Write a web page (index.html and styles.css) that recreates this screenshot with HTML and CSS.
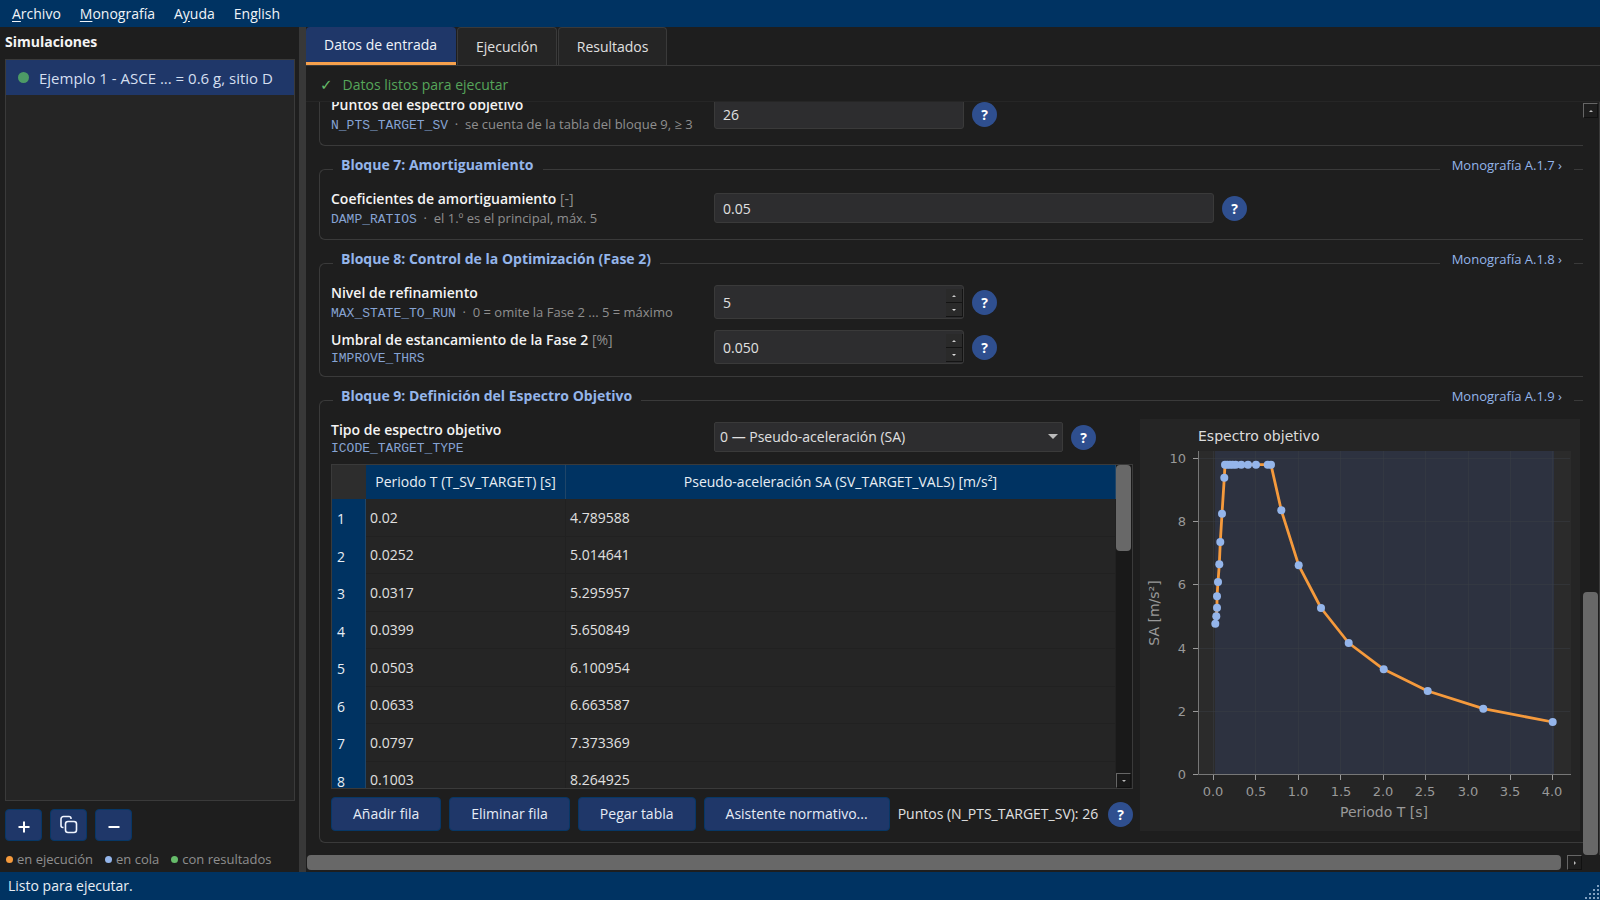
FILE: index.html
```html
<!DOCTYPE html>
<html lang="es">
<head>
<meta charset="utf-8">
<title>Simulaciones</title>
<link rel="stylesheet" href="styles.css">
</head>
<body>
<nav class="menubar">
  <button type="button"><u>A</u>rchivo</button>
  <button type="button"><u>M</u>onografía</button>
  <button type="button">A<u>y</u>uda</button>
  <button type="button">English</button>
</nav>

<div class="workspace">
  <aside class="sidebar">
    <h1 class="sidebar-title">Simulaciones</h1>
    <ul class="sim-list">
      <li class="sim-item"><span class="sim-dot"></span>Ejemplo 1 - ASCE ... = 0.6 g, sitio D</li>
    </ul>
    <div class="sim-actions">
      <button type="button" class="btn btn-icon" aria-label="Nueva"><svg width="14" height="18" viewBox="0 0 14 18"><path d="M7 5.500v11M1.500 11h11" stroke="#fff" stroke-width="2" fill="none"/></svg></button>
      <button type="button" class="btn btn-icon" aria-label="Duplicar"><svg width="20" height="20" viewBox="0 0 20 20" fill="none" stroke="#f0f4ff" stroke-width="1.600"><rect x="6.500" y="6.500" width="11" height="11" rx="2.500"/><path d="M4.500 12.500h-.5a2 2 0 0 1-2-2V4a2.500 2.500 0 0 1 2.500-2.500H10a2 2 0 0 1 2 2V4"/></svg></button>
      <button type="button" class="btn btn-icon" aria-label="Eliminar"><svg width="14" height="18" viewBox="0 0 14 18"><path d="M1.500 11h11" stroke="#fff" stroke-width="2" fill="none"/></svg></button>
    </div>
    <div class="legend">
      <span><i class="key key-run"></i>en ejecución</span>
      <span><i class="key key-queue"></i>en cola</span>
      <span><i class="key key-done"></i>con resultados</span>
    </div>
  </aside>
  <div class="splitter"></div>

  <main class="main">
    <div class="tabs" role="tablist">
      <button type="button" role="tab" class="tab tab-active" aria-selected="true">Datos de entrada</button>
      <button type="button" role="tab" class="tab">Ejecución</button>
      <button type="button" role="tab" class="tab">Resultados</button>
    </div>
    <div class="ready"><span class="check">✓</span>Datos listos para ejecutar</div>

    <div class="scroll-area">
      <div class="viewport">
        <section class="group">
          <div class="field">
            <div class="caption"><label for="npts">Puntos del espectro objetivo</label>
              <div class="sub"><code>N_PTS_TARGET_SV</code>  ·  se cuenta de la tabla del bloque 9, ≥ 3</div></div>
            <input class="input" id="npts" type="text" value="26" readonly>
            <button type="button" class="help" aria-label="Ayuda">?</button>
          </div>
        </section>

        <section class="group">
          <header class="group-head"><h2>Bloque 7: Amortiguamiento</h2><a href="#a17">Monografía A.1.7 ›</a></header>
          <div class="field">
            <div class="caption"><label for="damp">Coeficientes de amortiguamiento</label> <span class="unit">[-]</span>
              <div class="sub"><code>DAMP_RATIOS</code>  ·  el 1.º es el principal, máx. 5</div></div>
            <input class="input input-wide" id="damp" type="text" value="0.05">
            <button type="button" class="help" aria-label="Ayuda">?</button>
          </div>
        </section>

        <section class="group">
          <header class="group-head"><h2>Bloque 8: Control de la Optimización (Fase 2)</h2><a href="#a18">Monografía A.1.8 ›</a></header>
          <div class="field">
            <div class="caption"><label for="maxstate">Nivel de refinamiento</label>
              <div class="sub"><code>MAX_STATE_TO_RUN</code>  ·  0 = omite la Fase 2 ... 5 = máximo</div></div>
            <div class="spin"><input class="input" id="maxstate" type="text" value="5">
              <div class="steps"><button type="button" class="step step-up" aria-label="Más"></button><button type="button" class="step step-down" aria-label="Menos"></button></div></div>
            <button type="button" class="help" aria-label="Ayuda">?</button>
          </div>
          <div class="field">
            <div class="caption"><label for="thrs">Umbral de estancamiento de la Fase 2</label> <span class="unit">[%]</span>
              <div class="sub sub-short"><code>IMPROVE_THRS</code></div></div>
            <div class="spin"><input class="input" id="thrs" type="text" value="0.050">
              <div class="steps"><button type="button" class="step step-up" aria-label="Más"></button><button type="button" class="step step-down" aria-label="Menos"></button></div></div>
            <button type="button" class="help" aria-label="Ayuda">?</button>
          </div>
        </section>

        <section class="group">
          <header class="group-head"><h2>Bloque 9: Definición del Espectro Objetivo</h2><a href="#a19">Monografía A.1.9 ›</a></header>
          <div class="spectrum">
            <div class="spectrum-data">
              <div class="field">
                <div class="caption"><label for="ttype">Tipo de espectro objetivo</label>
                  <div class="sub sub-short"><code>ICODE_TARGET_TYPE</code></div></div>
                <div class="combo"><select id="ttype"><option>0 — Pseudo-aceleración (SA)</option></select></div>
                <button type="button" class="help" aria-label="Ayuda">?</button>
              </div>

              <div class="table-frame">
                <div class="table-clip">
                  <table class="grid">
                    <colgroup><col class="col-n"><col class="col-t"><col></colgroup>
                    <thead><tr><td class="corner"></td><th scope="col">Periodo T (T_SV_TARGET) [s]</th><th scope="col">Pseudo-aceleración SA (SV_TARGET_VALS) [m/s²]</th></tr></thead>
                    <tbody>
                      <tr><th scope="row">1</th><td>0.02</td><td>4.789588</td></tr>
                      <tr><th scope="row">2</th><td>0.0252</td><td>5.014641</td></tr>
                      <tr><th scope="row">3</th><td>0.0317</td><td>5.295957</td></tr>
                      <tr><th scope="row">4</th><td>0.0399</td><td>5.650849</td></tr>
                      <tr><th scope="row">5</th><td>0.0503</td><td>6.100954</td></tr>
                      <tr><th scope="row">6</th><td>0.0633</td><td>6.663587</td></tr>
                      <tr><th scope="row">7</th><td>0.0797</td><td>7.373369</td></tr>
                      <tr><th scope="row">8</th><td>0.1003</td><td>8.264925</td></tr>
                    </tbody>
                  </table>
                </div>
                <div class="vbar"><div class="thumb thumb-table"></div><span class="arrow arrow-down"></span></div>
              </div>

              <div class="table-actions">
                <button type="button" class="btn">Añadir fila</button>
                <button type="button" class="btn">Eliminar fila</button>
                <button type="button" class="btn">Pegar tabla</button>
                <button type="button" class="btn">Asistente normativo...</button>
                <span class="count">Puntos (N_PTS_TARGET_SV): 26</span>
                <button type="button" class="help" aria-label="Ayuda">?</button>
              </div>
            </div>

            <figure class="chart">
              <svg viewBox="0 -1 440 412" role="img" aria-label="Espectro objetivo">
                <rect x="58" y="31" width="373" height="323" fill="#2b2b2b"/>
                <rect x="75" y="31" width="339" height="323" fill="#2d3240"/>
                <path class="gridline" d="M73.500 31v323M115.500 31v323M158.500 31v323M200.500 31v323M243.500 31v323M285.500 31v323M328.500 31v323M370.500 31v323M412.500 31v323M58 38.500h372M58 101.500h372M58 164.500h372M58 228.500h372M58 291.500h372"/>
                <path class="axis" d="M58.500 31v323.500H431"/>
                <path class="tick" d="M53 38.500h5M53 101.500h5M53 164.500h5M53 228.500h5M53 291.500h5M53 354.500h5M73.500 355v5M115.500 355v5M158.500 355v5M200.500 355v5M243.500 355v5M285.500 355v5M328.500 355v5M370.500 355v5M412.500 355v5"/>
                <polyline id="curve" fill="none" stroke="#f59a3c" stroke-width="2.800" stroke-linejoin="round" marker-start="url(#dot)" marker-mid="url(#dot)" marker-end="url(#dot)" points="75.300,203.700 76.300,196.300 77,187.700 77,176.300 78,162 79.300,144.300 80.300,122 82,93.700 84.300,57.700 85,44.700 87.300,44.700 90,44.700 92.700,44.700 95.700,44.700 101.300,44.700 108,44.700 116,44.700 127.700,44.700 131,44.700 141.300,90.300 158.700,145.300 181,188 208.700,223 243.700,249.300 287.700,271 343.300,288.700 412.700,302"/>
                <defs><marker id="dot" markerUnits="userSpaceOnUse" markerWidth="10" markerHeight="10" refX="5" refY="5"><circle cx="5" cy="5" r="4" fill="#94b5ea"/></marker></defs>
                <text class="chart-title" x="58" y="21">Espectro objetivo</text>
                <g class="ticks-y"><text x="46" y="43">10</text><text x="46" y="106">8</text><text x="46" y="169">6</text><text x="46" y="233">4</text><text x="46" y="296">2</text><text x="46" y="359">0</text></g>
                <g class="ticks-x"><text x="73" y="376">0.0</text><text x="116" y="376">0.5</text><text x="158" y="376">1.0</text><text x="201" y="376">1.5</text><text x="243" y="376">2.0</text><text x="285" y="376">2.5</text><text x="328" y="376">3.0</text><text x="370" y="376">3.5</text><text x="412" y="376">4.0</text></g>
                <text class="axis-title" x="244" y="397">Periodo T [s]</text>
                <text class="axis-title" transform="translate(19 193) rotate(-90)">SA [m/s²]</text>
              </svg>
            </figure>
          </div>
        </section>
      </div>

      <div class="vbar vbar-main"><span class="arrow arrow-up"></span><div class="thumb thumb-main"></div></div>
      <div class="hbar"><div class="thumb thumb-h"></div><span class="arrow arrow-right"></span></div>
    </div>
  </main>
</div>

<footer class="statusbar"><span>Listo para ejecutar.</span>
  <svg class="grip" width="16" height="16" viewBox="0 0 16 16" fill="#7f9fc0"><path d="M13 1h2v2h-2zM9 5h2v2H9zM13 5h2v2h-2zM5 9h2v2H5zM9 9h2v2H9zM13 9h2v2h-2zM1 13h2v2H1zM5 13h2v2H5zM9 13h2v2H9zM13 13h2v2h-2z"/></svg>
</footer>
</body>
</html>
```
FILE: styles.css
```css
:root {
  --bg: #1e1e1e;
  --panel: #252525;
  --line: #3a3a3a;
  --navy: #003362;
  --blue: #1f3769;
  --link: #94b5ea;
  --text: #e0e0e0;
  --muted: #8f8f8f;
}

* { box-sizing: border-box; }

body {
  margin: 0;
  height: 100vh;
  display: flex;
  flex-direction: column;
  overflow: hidden;
  background: var(--bg);
  color: var(--text);
  font: 14px/20px "Open Sans", "Noto Sans", sans-serif;
}

button, input, select { font: inherit; color: inherit; margin: 0; }
button { cursor: pointer; }
h1, h2, ul, figure { margin: 0; padding: 0; }

.menubar {
  display: flex;
  flex: none;
  gap: 1px;
  height: 27px;
  padding: 0 3px;
  background: var(--navy);
}
.menubar button {
  padding: 0 9px;
  border: 0;
  background: none;
  color: #f0f4f8;
}
.menubar u { text-underline-offset: 2px; }

.workspace { display: flex; flex: 1; min-height: 0; }

.sidebar {
  display: flex;
  flex-direction: column;
  flex: none;
  width: 299px;
  padding: 5px 4px 2px 5px;
}
.sidebar-title { font-size: 14px; line-height: 20px; font-weight: 700; color: #f4f4f4; }
.sim-list {
  flex: 1;
  margin-top: 7px;
  border: 1px solid var(--line);
  background: var(--panel);
  list-style: none;
}
.sim-item {
  display: flex;
  align-items: center;
  gap: 10px;
  height: 35px;
  padding-left: 12px;
  background: var(--blue);
  color: #d4dff0;
  font-size: 15px;
  white-space: nowrap;
}
.sim-dot { width: 11px; height: 11px; border-radius: 50%; background: #4d9b66; }
.sim-actions { display: flex; gap: 8px; margin-top: 8px; }

.btn {
  height: 34px;
  padding: 0 21px;
  border: 1px solid #073766;
  border-radius: 4px;
  background: var(--blue);
  color: #e6ecf6;
  white-space: nowrap;
}
.btn-icon {
  display: flex;
  align-items: center;
  justify-content: center;
  width: 37px;
  height: 32px;
  padding: 0;
}

.legend {
  display: flex;
  gap: 11px;
  margin-top: 7px;
  color: var(--muted);
  font-size: 13px;
  line-height: 22px;
}
.legend span { display: flex; align-items: center; gap: 4px; }
.key { width: 7px; height: 7px; margin-left: 1px; border-radius: 50%; }
.key-run { background: #f59a3c; }
.key-queue { background: #94b5ea; }
.key-done { background: #66bb6a; }

.splitter { flex: none; width: 7px; background: #383838; }

.main { display: flex; flex-direction: column; flex: 1; min-width: 0; }

.tabs {
  display: flex;
  gap: 1px;
  flex: none;
  height: 39px;
  border-bottom: 1px solid var(--line);
}
.tab {
  padding: 0 18px;
  border: 1px solid var(--line);
  border-bottom: 0;
  border-radius: 4px 4px 0 0;
  background: var(--panel);
}
.tab-active {
  padding: 0 19px 0 18px;
  border: 0;
  border-bottom: 3px solid #f5a04c;
  background: var(--blue);
  color: #f0f4fa;
}

.ready {
  display: flex;
  gap: 10px;
  flex: none;
  height: 36px;
  padding: 9px 14px 0;
  border-bottom: 1px solid #262626;
  color: #56a55a;
}
.check { font-family: "DejaVu Sans", sans-serif; font-size: 15px; color: #66bb6a; }

.scroll-area {
  display: grid;
  grid-template: minmax(0, 1fr) 17px / minmax(0, 1fr) 17px;
  flex: 1;
  min-height: 0;
}
.viewport {
  display: flex;
  flex-direction: column;
  justify-content: flex-end;
  gap: 23px;
  overflow: hidden;
  padding: 0 0 12px 13px;
}

.group {
  flex: none;
  padding: 18px 3px 11px 11px;
  border: 1px solid var(--line);
  border-right: 0;
  border-radius: 6px 0 0 6px;
}
.group-head {
  display: flex;
  justify-content: space-between;
  height: 22px;
  margin: -34px 6px 12px 2px;
}
.group-head h2,
.group-head a { background: var(--bg); line-height: 22px; white-space: nowrap; }
.group-head h2 { padding: 0 9px 0 8px; font-size: 14px; font-weight: 700; color: var(--link); }
.group-head a { padding: 0 12px; font-size: 13px; color: var(--link); text-decoration: none; }

.field { display: flex; align-items: center; gap: 8px; }
.field + .field { margin-top: 7px; }
.caption { flex: none; width: 375px; padding-bottom: 2px; line-height: 22px; white-space: nowrap; }
.caption label { font-weight: 600; color: #f4f4f4; }
.unit { color: var(--muted); }
.sub { color: var(--muted); font-size: 13px; line-height: 16px; white-space: pre; }
.sub-short { line-height: 12px; }
.sub code { font: 13px "Liberation Mono", monospace; line-height: 0; color: #86a3d3; }

.input {
  width: 250px;
  height: 30px;
  padding: 0 8px;
  border: 1px solid var(--line);
  border-radius: 3px;
  background: #2d2d2f;
}
.input-wide { width: 500px; }

.spin { position: relative; }
.spin .input { display: block; height: 34px; }
.steps { position: absolute; top: 4px; right: 1px; width: 17px; }
.step {
  display: flex;
  align-items: center;
  justify-content: center;
  width: 100%;
  height: 14px;
  padding: 0;
  border: solid #141414;
  border-width: 0 1px 1px 0;
  background: #2a2a2a;
}
.step::before { content: ""; border: 2px solid transparent; }
.step-up::before { border-bottom-color: #ccc; border-top-width: 0; }
.step-down::before { border-top-color: #ddd; border-bottom-width: 0; }

.help {
  flex: none;
  width: 25px;
  height: 25px;
  padding: 0;
  border: 0;
  border-radius: 50%;
  background: #2f4f8f;
  color: #fff;
  font-weight: 700;
  line-height: 25px;
}

.combo { position: relative; width: 349px; }
.combo select {
  display: block;
  width: 100%;
  height: 30px;
  padding: 0 24px 0 5px;
  border: 1px solid var(--line);
  border-radius: 2px;
  appearance: none;
  background: #2d2d2f;
}
.combo::after {
  content: "";
  position: absolute;
  top: 12px;
  right: 5px;
  border: 5px solid transparent;
  border-top-color: #bbb;
  border-bottom: 0;
  pointer-events: none;
}

.spectrum { display: flex; gap: 7px; }
.spectrum-data { flex: 1; min-width: 0; }

.table-frame {
  display: flex;
  height: 325px;
  margin-top: 9px;
  border: 1px solid var(--line);
}
.table-clip { flex: 1; overflow: hidden; background: var(--panel); }
.grid { width: 100%; border-collapse: separate; border-spacing: 0; table-layout: fixed; }
.col-n { width: 34px; }
.col-t { width: 200px; }
.grid th, .grid td { padding: 0; font-weight: 400; }
.grid thead tr { height: 34px; }
.grid thead th { border-right: 1px solid #1f4568; background: var(--navy); color: #e8eef4; white-space: nowrap; }
.grid .corner { background: #2d2d2d; }
.grid tbody tr { height: 37px; }
.grid tbody tr:nth-child(odd) { height: 38px; }
.grid tbody th {
  padding: 2px 0 0 5px;
  border-right: 1px solid #1f4568;
  background: var(--navy);
  color: #e8eef4;
  text-align: left;
}
.grid tbody td { padding-left: 4px; border: solid #212121; border-width: 0 1px 1px 0; }

.vbar { display: flex; flex-direction: column; justify-content: space-between; width: 16px; padding-right: 1px; background: #191919; }
.thumb { border-radius: 4px; background: #686868; }
.thumb-table { height: 86px; }
.arrow {
  display: flex;
  align-items: center;
  justify-content: center;
  width: 15px;
  height: 15px;
  border: 1px solid #666;
  border-right-color: #111;
  border-bottom-color: #111;
}
.arrow::before { content: ""; border: 2px solid transparent; }
.arrow-down::before { border-top-color: #bbb; border-bottom: 0; }
.arrow-up::before { border-bottom-color: #bbb; border-top: 0; }
.arrow-right::before { border-left-color: #bbb; border-right: 0; }

.vbar-main { width: auto; padding: 1px 1px 0 0; border-right: 1px solid var(--line); background: var(--bg); }
.thumb-main { height: 35%; }
.hbar { display: flex; gap: 6px; padding: 0 1px 2px; }
.thumb-h { flex: 1; }

.table-actions { display: flex; align-items: center; gap: 8px; margin-top: 8px; white-space: nowrap; }
.count { flex: 1; }

.chart { flex: none; width: 440px; background: var(--panel); }
.chart svg { display: block; width: 100%; font-family: "DejaVu Sans", sans-serif; }
.gridline { stroke: #3a3d44; stroke-opacity: .5; fill: none; }
.axis { stroke: #777; stroke-width: 1; fill: none; }
.tick { stroke: #999; fill: none; }
.chart-title { font-size: 14px; fill: #dcdcdc; }
.ticks-x, .ticks-y { font-size: 13px; fill: #999; }
.ticks-y { text-anchor: end; }
.ticks-x, .axis-title { text-anchor: middle; }
.axis-title { font-size: 14px; fill: #999; }

.statusbar {
  display: flex;
  justify-content: space-between;
  align-items: center;
  flex: none;
  height: 28px;
  padding-left: 8px;
  background: var(--navy);
  color: #e8eef4;
}
.grip { align-self: flex-end; }
```
